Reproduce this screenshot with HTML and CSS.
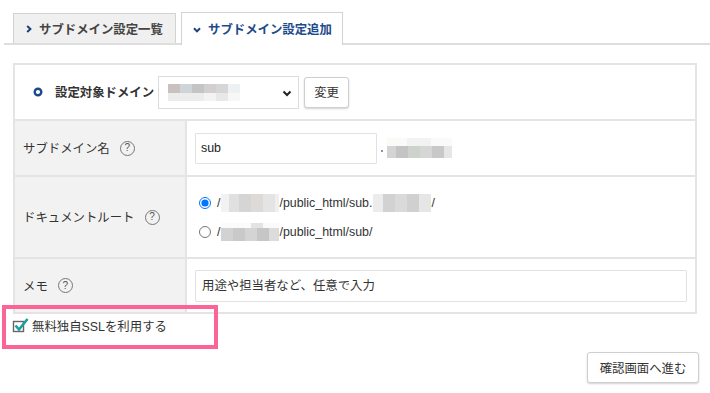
FILE: index.html
```html
<!DOCTYPE html>
<html lang="ja">
<head>
<meta charset="utf-8">
<title>サブドメイン設定追加</title>
<link rel="stylesheet" href="styles.css">
</head>
<body>
<div class="page">
  <div class="tabs">
    <div class="tab tab-off">
      <svg class="chev" width="6" height="8" viewBox="0 0 6 8"><path d="M1.2 1 L4.4 4 L1.2 7" fill="none" stroke="#1d3f7a" stroke-width="2"/></svg>
      <span>サブドメイン設定一覧</span>
    </div>
    <div class="tab tab-on">
      <svg class="chev" width="8" height="6" viewBox="0 0 8 6"><path d="M1 1.3 L4 4.4 L7 1.3" fill="none" stroke="#1d3f7a" stroke-width="2"/></svg>
      <span>サブドメイン設定追加</span>
    </div>
  </div>

  <div class="form">
    <div class="row row-target">
      <svg class="ring" width="10" height="10" viewBox="0 0 10 10"><circle cx="5" cy="5" r="3.3" fill="none" stroke="#1b4a8c" stroke-width="2.4"/></svg>
      <span class="target-label">設定対象ドメイン</span>
      <div class="select">
        <span class="blur blur-select"></span>
        <svg class="sel-chev" width="10" height="7" viewBox="0 0 10 7"><path d="M1.5 1.5 L5 5 L8.5 1.5" fill="none" stroke="#222" stroke-width="2"/></svg>
      </div>
      <button class="btn btn-small">変更</button>
    </div>

    <div class="row">
      <div class="label">サブドメイン名<span class="help">?</span></div>
      <div class="value">
        <input class="input input-sub" type="text" value="sub">
        <span class="dot"></span>
        <span class="blur blur-domain"></span>
      </div>
    </div>

    <div class="row row-doc">
      <div class="label">ドキュメントルート<span class="help">?</span></div>
      <div class="value value-col">
        <label class="radio-line"><input type="radio" name="doc" checked><span>/</span><span class="blur blur-path"></span><span>/public_html/sub.</span><span class="blur blur-path2"></span><span>/</span></label>
        <label class="radio-line"><input type="radio" name="doc"><span>/</span><span class="blur blur-path3"></span><span>/public_html/sub/</span></label>
      </div>
    </div>

    <div class="row row-memo">
      <div class="label">メモ<span class="help">?</span></div>
      <div class="value">
        <input class="input input-memo" type="text" placeholder="用途や担当者など、任意で入力">
      </div>
    </div>
  </div>

  <div class="ssl">
    <svg class="check" width="18" height="16" viewBox="0 0 18 16"><rect x="1.5" y="4.5" width="10" height="10" fill="#fff" stroke="#666" stroke-width="1.4"/><path d="M3.5 8.5 L7 12.5 L15.5 2" fill="none" stroke="#17a0a0" stroke-width="2.6"/></svg>
    <span>無料独自SSLを利用する</span>
  </div>

  <div class="actions">
    <button class="btn btn-next">確認画面へ進む</button>
  </div>

  <div class="highlight"></div>
</div>
</body>
</html>
```

FILE: styles.css
```css
* { box-sizing: border-box; }
html, body { margin: 0; padding: 0; background: #fff; }
body {
  font-family: "Liberation Sans", "Noto Sans CJK JP", sans-serif;
  font-size: 12.4px;
  color: #333;
}
.page { position: relative; width: 710px; height: 393px; padding-top: 12px; }

.tabs {
  display: flex;
  align-items: flex-end;
  gap: 5px;
  margin-left: 4px;
  padding-left: 9px;
  height: 33px;
  border-bottom: 2px solid #dedede;
}
.tab {
  display: flex;
  align-items: center;
  gap: 7px;
  border: 1px solid #d3d3d3;
  border-bottom: none;
  font-weight: bold;
  white-space: nowrap;
}
.tab-off {
  width: 163px;
  height: 30px;
  padding-left: 12px;
  background: #f0f0f0;
  color: #444;
}
.tab-on {
  width: 162px;
  height: 33px;
  margin-bottom: -2px;
  padding-left: 11px;
  background: #fff;
  color: #1d4a8c;
}
.tab-on .chev { margin-top: 1px; }

.form {
  margin: 18px 13px 0 13px;
  border: 2px solid #e4e4e4;
}
.row {
  display: flex;
  height: 56px;
  border-top: 2px solid #e4e4e4;
}
.row-target { height: 54px; border-top: none; }
.row-doc { height: 82px; }
.row-memo { height: 55px; }

.row-target {
  align-items: center;
  padding-left: 18px;
}
.ring { display: block; margin-right: 12px; }
.target-label { font-weight: bold; color: #333; margin-right: 4px; }
.select {
  position: relative;
  display: flex;
  align-items: center;
  width: 141px;
  height: 33px;
  border: 1px solid #dcdcdc;
  background: #fff;
  padding-left: 9px;
}
.sel-chev { position: absolute; right: 6px; top: 13px; }
.btn {
  font-family: inherit;
  font-size: 12.4px;
  color: #333;
  background: #fff;
  border: 1px solid #cfcfcf;
  border-radius: 3px;
  box-shadow: 0 1px 2px rgba(0,0,0,0.18);
  padding: 0;
}
.btn-small { width: 45px; height: 31px; margin-left: 5px; }

.label {
  display: flex;
  align-items: center;
  width: 172px;
  flex: none;
  padding-left: 8px;
  background: #f2f2f2;
  border-right: 2px solid #e4e4e4;
  color: #333;
}
.help {
  display: inline-flex;
  align-items: center;
  justify-content: center;
  width: 15px;
  height: 15px;
  margin-left: 10px;
  border: 1.2px solid #777;
  border-radius: 50%;
  font-size: 10px;
  line-height: 1;
  color: #555;
}
.value {
  display: flex;
  align-items: center;
  flex: 1;
  padding-left: 8px;
}
.value-col {
  flex-direction: column;
  align-items: flex-start;
  justify-content: center;
  gap: 11px;
  padding-left: 12px;
}
.input {
  font-family: inherit;
  font-size: 12.4px;
  color: #222;
  border: 1.5px solid #e2e2e2;
  border-radius: 1px;
  background: #fff;
  outline: none;
}
.input-sub { width: 182px; height: 31px; padding: 0 5px; }
.input-memo { width: 492px; height: 32px; padding: 0 6px; }
.input-memo::placeholder { color: #333; opacity: 1; }
.dot { width: 2px; height: 2px; margin: 6px 4px 0 4px; background: #7a9ab8; }

.radio-line {
  display: flex;
  align-items: center;
  height: 18px;
  white-space: nowrap;
}
.radio-line input {
  width: 12px;
  height: 12px;
  margin: 0 6px 0 0;
}

.blur { display: inline-block; }
.blur-select {
  width: 72px;
  height: 17px;
  background:
    linear-gradient(to right, #c9c0c0 0 12px, #cfd4d8 12px 24px, #c4c4c4 24px 36px, #d3cfcf 36px 48px, #d6d6d6 48px 60px, #eef1f4 60px 72px) top / 100% 9px no-repeat,
    linear-gradient(to right, #ececec 0 36px, #f3f3f3 36px 48px, #e8e8e8 48px 60px, #f7f7f7 60px 72px) bottom / 100% 8px no-repeat;
}
.blur-domain {
  width: 65px;
  height: 20px;
  background:
    linear-gradient(to right, #fafaf6 0 20px, #f2f2f2 20px 44px, #fafafa 44px 65px) top / 100% 8px no-repeat,
    linear-gradient(to right, #d4d4d4 0 9px, #c4c4c4 9px 21px, #cdd2cd 21px 33px, #d6d6d6 33px 45px, #c8c8c8 45px 57px, #e6e6e6 57px 65px) bottom / 100% 12px no-repeat;
}
.blur-path {
  width: 58px;
  height: 18px;
  margin-left: 1px;
  background: linear-gradient(to right, #f2f2f2 0 8px, #e0e0e0 8px 18px, #d5d5d5 18px 30px, #dedad8 30px 42px, #e4e4e4 42px 54px, #efefef 54px 58px);
}
.blur-path2 {
  width: 58px;
  height: 18px;
  margin-left: 1px;
  background: linear-gradient(to right, #ececec 0 10px, #d2d2d2 10px 22px, #dadada 22px 34px, #d0d0d0 34px 46px, #e6e6e6 46px 58px);
}
.blur-path3 {
  width: 58px;
  height: 18px;
  margin-left: 1px;
  background:
    linear-gradient(to right, #fbfbfb 0 30px, #e3e3e3 30px 42px, #fafafa 42px 58px) top / 100% 5px no-repeat,
    linear-gradient(to right, #d2d2d2 0 12px, #c9c9c9 12px 24px, #d4d4d4 24px 36px, #c6c6c6 36px 48px, #dcdcdc 48px 58px) bottom / 100% 13px no-repeat;
}

.ssl {
  display: flex;
  align-items: center;
  gap: 2px;
  height: 24px;
  margin: 0 0 0 12px;
  color: #333;
}
.check { display: block; margin-top: -3px; }

.actions {
  display: flex;
  justify-content: flex-end;
  margin: 14px 11px 0 0;
}
.btn-next { width: 112px; height: 31px; }

.highlight {
  position: absolute;
  left: 2px;
  top: 305px;
  width: 216px;
  height: 44px;
  border: 4px solid #fb6496;
  pointer-events: none;
}
```
